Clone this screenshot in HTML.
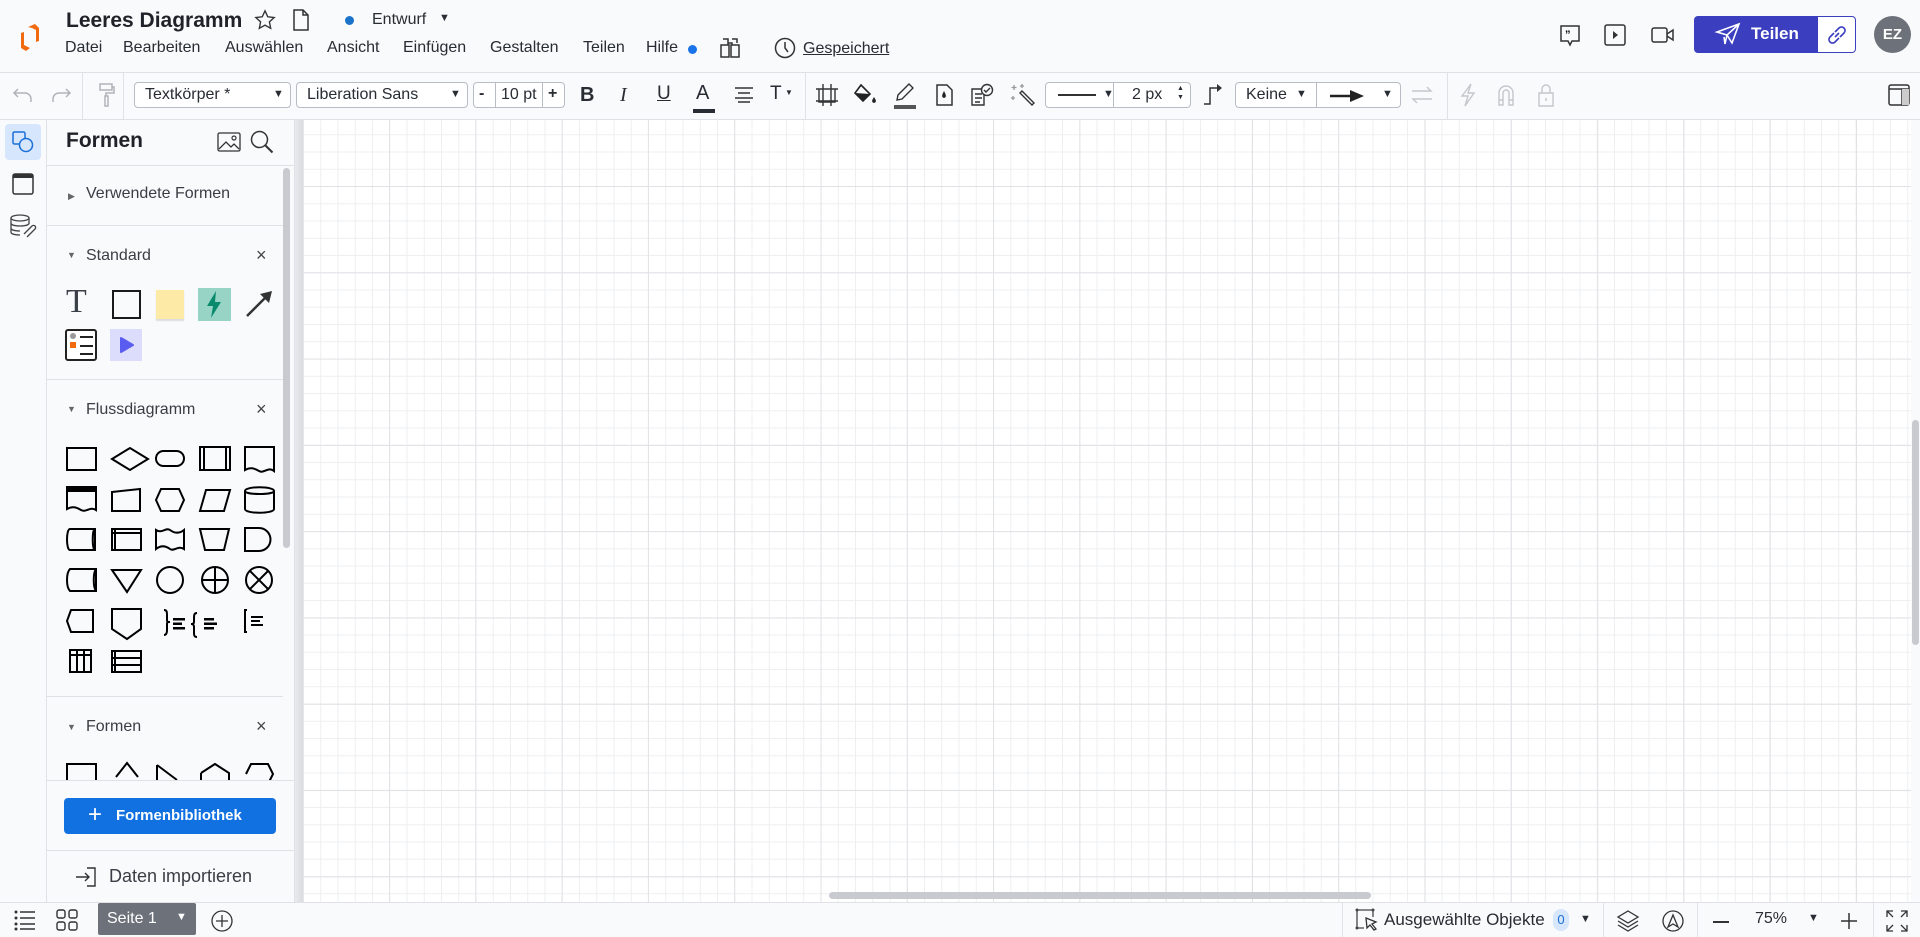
<!DOCTYPE html>
<html><head><meta charset="utf-8">
<style>
*{box-sizing:border-box;margin:0;padding:0}
body{width:1920px;height:937px;overflow:hidden;background:#f9fafc;font-family:"Liberation Sans",sans-serif;color:#282c33;position:relative}
.a{position:absolute}
.t{position:absolute;white-space:nowrap}
svg{position:absolute;overflow:visible}
.menu span{position:absolute;top:39px;font-size:16px;color:#282c33}
.sel{position:absolute;top:82px;height:26px;border:1px solid #b8bcc4;border-radius:4px;background:#fff;font-size:16px}
.hl{position:absolute;height:1px;background:#dfe1e6}
.vl{position:absolute;width:1px;background:#dfe1e6}
</style></head><body>
<!-- header -->
<svg width="24" height="28" style="left:18px;top:24px" viewBox="0 0 24 28"><path d="M10 3 L17 0 L21 4 L21 17 L18 18 L18 6 L14 4 Z" fill="#f26a10"/><path d="M3 9 L6 8 L6 21 L12 24 L8 27 L3 24 Z" fill="#f26a10"/></svg>
<div class="t" style="left:66px;top:9px;font-size:21px;font-weight:bold;color:#1f2329">Leeres Diagramm</div>
<svg width="22" height="22" style="left:254px;top:9px" viewBox="0 0 24 24"><path d="M12 2l3 6.5 7 .8-5.2 4.8 1.4 7L12 17.6 5.8 21.1l1.4-7L2 9.3l7-.8z" fill="none" stroke="#333" stroke-width="1.5"/></svg>
<svg width="18" height="22" style="left:292px;top:9px" viewBox="0 0 18 22"><path d="M2 1h9l5 5v15H2z M11 1v5h5" fill="none" stroke="#333" stroke-width="1.5"/></svg>
<div class="a" style="left:345px;top:16px;width:9px;height:9px;border-radius:50%;background:#1a73c8"></div>
<div class="t" style="left:372px;top:11px;font-size:16px">Entwurf</div>
<div class="t" style="left:439px;top:12px;font-size:11px">▼</div>
<div class="menu"><span style="left:65px">Datei</span><span style="left:123px">Bearbeiten</span><span style="left:225px">Auswählen</span><span style="left:327px">Ansicht</span><span style="left:403px">Einfügen</span><span style="left:490px">Gestalten</span><span style="left:583px">Teilen</span><span style="left:646px">Hilfe</span></div>
<div class="a" style="left:688px;top:45px;width:9px;height:9px;border-radius:50%;background:#1a73e8"></div>
<svg width="20" height="22" style="left:720px;top:37px" viewBox="0 0 20 22"><path d="M3 2h5v4 M12 2h5v4 M1 8h8v12H1z M11 8h8v12h-8z M8 8v-2h4v2" fill="none" stroke="#333" stroke-width="1.5"/></svg>
<svg width="22" height="22" style="left:774px;top:37px" viewBox="0 0 22 22"><circle cx="11" cy="11" r="9.5" fill="none" stroke="#333" stroke-width="1.5"/><path d="M11 5v6l3 4" fill="none" stroke="#333" stroke-width="1.5"/></svg>
<div class="t" style="left:803px;top:40px;font-size:16px;text-decoration:underline">Gespeichert</div>
<!-- right header -->
<svg width="22" height="24" style="left:1559px;top:24px" viewBox="0 0 22 24"><path d="M2 2h18v15h-7l-2 4-2-4H2z" fill="none" stroke="#333" stroke-width="1.5"/><text x="6" y="14" font-size="11" font-weight="bold" font-family="Liberation Sans">”</text></svg>
<svg width="22" height="22" style="left:1604px;top:24px" viewBox="0 0 22 22"><rect x="1" y="1" width="20" height="20" rx="2" fill="none" stroke="#333" stroke-width="1.5"/><path d="M9 7l5 4-5 4z" fill="#333"/></svg>
<svg width="24" height="18" style="left:1651px;top:26px" viewBox="0 0 24 18"><rect x="1" y="2" width="15" height="14" rx="2" fill="none" stroke="#333" stroke-width="1.5"/><path d="M16 8l6-4v10l-6-4" fill="none" stroke="#333" stroke-width="1.5"/></svg>
<div class="a" style="left:1694px;top:16px;width:162px;height:37px;border-radius:4px;background:#3b3fbf;border:1px solid #3b3fbf"></div>
<div class="a" style="left:1818px;top:17px;width:37px;height:35px;border-radius:0 3px 3px 0;background:#fff"></div>
<svg width="24" height="22" style="left:1716px;top:23px" viewBox="0 0 24 22"><path d="M1 9L23 1 16 20 11 12z M23 1L11 12 9 21 8 14" fill="none" stroke="#fff" stroke-width="1.6"/></svg>
<div class="t" style="left:1751px;top:24px;font-size:17px;font-weight:bold;color:#fff">Teilen</div>
<svg width="22" height="22" style="left:1826px;top:24px" viewBox="0 0 22 22"><path d="M9 13l4-4 M8 9l-4 4a3 3 0 0 0 5 5l4-4 M14 13l4-4a3 3 0 0 0-5-5l-4 4" fill="none" stroke="#3b3fbf" stroke-width="1.6"/></svg>
<div class="a" style="left:1874px;top:16px;width:37px;height:37px;border-radius:50%;background:#6d717a;color:#fff;font-weight:bold;font-size:15px;text-align:center;line-height:37px">EZ</div>
<!-- toolbar -->
<div class="hl" style="left:0;top:72px;width:1920px"></div>
<div class="hl" style="left:0;top:119px;width:1920px"></div>
<div class="vl" style="left:82px;top:72px;height:47px"></div>
<div class="vl" style="left:123px;top:72px;height:47px"></div>
<div class="vl" style="left:805px;top:72px;height:47px"></div>
<div class="vl" style="left:1447px;top:72px;height:47px"></div>
<svg width="22" height="16" style="left:12px;top:87px" viewBox="0 0 22 16"><path d="M6 2L2 6l4 4 M2 6h11a6 6 0 0 1 6 6v3" fill="none" stroke="#b0b3b9" stroke-width="1.5"/></svg>
<svg width="22" height="16" style="left:50px;top:87px" viewBox="0 0 22 16"><path d="M16 2l4 4-4 4 M20 6H9a6 6 0 0 0-6 6v3" fill="none" stroke="#b0b3b9" stroke-width="1.5"/></svg>
<svg width="16" height="24" style="left:99px;top:83px" viewBox="0 0 16 24"><path d="M1 1h12v6H1z M13 4h2v6H7v3 M6 13h3v10H6z" fill="none" stroke="#b0b3b9" stroke-width="1.5"/></svg>
<div class="sel" style="left:134px;width:157px"><span class="t" style="left:10px;top:3px">Textkörper *</span><span class="t" style="left:138px;top:5px;font-size:11px">▼</span></div>
<div class="sel" style="left:296px;width:172px"><span class="t" style="left:10px;top:3px">Liberation Sans</span><span class="t" style="left:153px;top:5px;font-size:11px">▼</span></div>
<div class="sel" style="left:473px;width:92px"><span class="t" style="left:5px;top:2px;font-weight:bold">-</span><div class="vl" style="left:21px;top:0;height:24px;background:#b8bcc4"></div><span class="t" style="left:27px;top:3px">10 pt</span><div class="vl" style="left:68px;top:0;height:24px;background:#b8bcc4"></div><span class="t" style="left:74px;top:2px;font-weight:bold">+</span></div>
<div class="t" style="left:580px;top:84px;font-size:20px;font-weight:bold">B</div>
<div class="t" style="left:620px;top:84px;font-size:20px;font-style:italic;font-family:'Liberation Serif',serif">I</div>
<div class="t" style="left:657px;top:83px;font-size:19px;text-decoration:underline">U</div>
<div class="t" style="left:696px;top:82px;font-size:20px">A</div>
<div class="a" style="left:693px;top:109px;width:22px;height:4px;background:#282c33"></div>
<svg width="20" height="16" style="left:734px;top:87px" viewBox="0 0 20 16"><path d="M1 1h18 M4 6h12 M1 11h18 M4 15h12" stroke="#333" stroke-width="1.4"/></svg>
<div class="t" style="left:770px;top:83px;font-size:19px">T</div><div class="t" style="left:785px;top:88px;font-size:8px">▼</div>
<svg width="24" height="24" style="left:815px;top:83px" viewBox="0 0 24 24"><path d="M4 6h16v13H4z M8 1v22 M16 1v22 M1 6h22 M1 18h22" fill="none" stroke="#333" stroke-width="1.4"/></svg>
<svg width="26" height="24" style="left:853px;top:83px" viewBox="0 0 26 24"><path d="M8 2l9 9-7 7-8-8z" fill="none" stroke="#222" stroke-width="1.6"/><path d="M2 10l15 1-7 7z" fill="#222"/><path d="M21 14c-2 3-3 5 0 6 3-1 2-3 0-6z" fill="#222"/></svg>
<svg width="24" height="26" style="left:893px;top:82px" viewBox="0 0 24 26"><path d="M4 18l1-5 11-11 4 4-11 11z" fill="none" stroke="#333" stroke-width="1.4"/><rect x="1" y="23" width="22" height="4" fill="#555"/></svg>
<svg width="18" height="22" style="left:935px;top:84px" viewBox="0 0 18 22"><path d="M2 1h10l5 5v15H2z" fill="none" stroke="#333" stroke-width="1.5"/><path d="M9 7c-2 4-3 6 0 7 3-1 2-3 0-7z" fill="#222"/></svg>
<svg width="24" height="24" style="left:970px;top:83px" viewBox="0 0 24 24"><path d="M2 6h12v16H2z M5 11h7 M5 15h7 M5 19h5" fill="none" stroke="#333" stroke-width="1.4"/><circle cx="17" cy="7" r="5.5" fill="#f9fafc" stroke="#333" stroke-width="1.4"/><path d="M14 7l2 2 4-4" fill="none" stroke="#333" stroke-width="1.4"/></svg>
<svg width="26" height="24" style="left:1010px;top:83px" viewBox="0 0 26 24"><path d="M10 10l12 12 2-2L12 8z" fill="none" stroke="#333" stroke-width="1.4"/><path d="M4 2v5 M1.5 4.5h5 M12 1v4 M10 3h4 M3 13v4 M1 15h4" stroke="#999" stroke-width="1.3"/></svg>
<div class="sel" style="left:1045px;width:146px"><div class="a" style="left:12px;top:11px;width:38px;height:2px;background:#333"></div><span class="t" style="left:57px;top:5px;font-size:11px">▼</span><div class="vl" style="left:67px;top:0;height:24px;background:#b8bcc4"></div><span class="t" style="left:86px;top:3px">2 px</span><span class="t" style="left:131px;top:1px;font-size:7px;line-height:9px">▲<br>▼</span></div>
<svg width="20" height="22" style="left:1203px;top:84px" viewBox="0 0 20 22"><path d="M1 20h6V4h8" fill="none" stroke="#333" stroke-width="1.5"/><path d="M14 0l5 4-5 4z" fill="#333"/></svg>
<div class="sel" style="left:1235px;width:166px"><span class="t" style="left:10px;top:3px">Keine</span><span class="t" style="left:60px;top:5px;font-size:11px">▼</span><div class="vl" style="left:80px;top:0;height:24px;background:#b8bcc4"></div><svg width="34" height="12" style="left:94px;top:7px" viewBox="0 0 34 12"><path d="M0 6h22" stroke="#222" stroke-width="2.5"/><path d="M20 0l14 6-14 6z" fill="#222"/></svg><span class="t" style="left:146px;top:5px;font-size:11px">▼</span></div>
<svg width="24" height="20" style="left:1410px;top:85px" viewBox="0 0 24 20"><path d="M2 6h19l-4-4 M22 14H3l4 4" fill="none" stroke="#c4c6cb" stroke-width="1.4"/></svg>
<svg width="18" height="24" style="left:1459px;top:83px" viewBox="0 0 18 24"><path d="M12 1L3 13h6l-3 10 9-13h-6z" fill="none" stroke="#c4c6cb" stroke-width="1.4"/></svg>
<svg width="18" height="22" style="left:1497px;top:84px" viewBox="0 0 18 22"><path d="M2 21V9a7 7 0 0 1 14 0v12h-4V9a3 3 0 0 0-6 0v12z M2 16h4 M12 16h4" fill="none" stroke="#c4c6cb" stroke-width="1.4"/></svg>
<svg width="18" height="24" style="left:1537px;top:83px" viewBox="0 0 18 24"><path d="M2 10h14v13H2z M5 10V6a4 4 0 0 1 8 0v4 M9 15v3" fill="none" stroke="#c4c6cb" stroke-width="1.4"/></svg>
<svg width="22" height="22" style="left:1888px;top:84px" viewBox="0 0 22 22"><rect x="1" y="1" width="20" height="20" rx="2" fill="none" stroke="#333" stroke-width="1.5"/><path d="M1 5h20 M14 5v16" stroke="#333" stroke-width="1.5"/><rect x="14" y="5" width="7" height="16" fill="#ccc"/></svg>
<!-- left rail -->
<div class="vl" style="left:46px;top:120px;height:782px"></div>
<div class="a" style="left:5px;top:124px;width:36px;height:36px;border-radius:4px;background:#d6e6fc"></div>
<svg width="24" height="24" style="left:11px;top:130px" viewBox="0 0 24 24"><rect x="2" y="2" width="12" height="12" rx="1.5" fill="none" stroke="#1a6fd8" stroke-width="1.5"/><circle cx="15" cy="15" r="6.5" fill="#d6e6fc" stroke="#1a6fd8" stroke-width="1.5"/></svg>
<svg width="22" height="22" style="left:12px;top:173px" viewBox="0 0 22 22"><rect x="1" y="1" width="20" height="20" rx="2" fill="none" stroke="#333" stroke-width="1.5"/><rect x="1" y="1" width="20" height="4" fill="#333"/></svg>
<svg width="26" height="24" style="left:10px;top:214px" viewBox="0 0 26 24"><ellipse cx="10" cy="4" rx="9" ry="3" fill="none" stroke="#444" stroke-width="1.3"/><path d="M1 4v14c0 2 4 3 9 3 M19 4v6 M1 9c0 2 4 3 9 3s9-1 9-3 M1 14c0 2 4 3 9 3" fill="none" stroke="#444" stroke-width="1.3"/><path d="M14 20l8-8a2 2 0 0 1 3 3l-8 8" fill="none" stroke="#444" stroke-width="1.3"/></svg>
<!-- panel -->
<div class="vl" style="left:294px;top:120px;height:782px"></div>
<div class="a" style="left:295px;top:120px;width:8px;height:782px;background:linear-gradient(90deg,#e9eaee,#d9dbe0)"></div>
<div class="t" style="left:66px;top:129px;font-size:21px;font-weight:bold;color:#1f2329">Formen</div>
<svg width="24" height="20" style="left:217px;top:132px" viewBox="0 0 24 20"><rect x="1" y="1" width="22" height="18" rx="1.5" fill="none" stroke="#333" stroke-width="1.3"/><path d="M2 17l7-7 5 5 3-3 5 5" fill="none" stroke="#333" stroke-width="1.3"/><circle cx="17" cy="6" r="2" fill="none" stroke="#333" stroke-width="1.2"/></svg>
<svg width="24" height="24" style="left:250px;top:130px" viewBox="0 0 24 24"><circle cx="9.5" cy="9.5" r="8" fill="none" stroke="#333" stroke-width="1.5"/><path d="M15.5 15.5l7 7" stroke="#333" stroke-width="2"/></svg>
<div class="hl" style="left:47px;top:165px;width:247px"></div>
<div class="t" style="left:68px;top:191px;font-size:9px;color:#666">▶</div>
<div class="t" style="left:86px;top:185px;font-size:16px;color:#3a3d44">Verwendete Formen</div>
<div class="hl" style="left:47px;top:225px;width:236px"></div>
<div class="t" style="left:67px;top:250px;font-size:9px;color:#666">▼</div>
<div class="t" style="left:86px;top:247px;font-size:16px;color:#3a3d44">Standard</div>
<div class="t" style="left:256px;top:245px;font-size:18px;color:#444">×</div>
<div class="t" style="left:66px;top:283px;font-size:34px;font-family:'Liberation Serif',serif;color:#3a3f48">T</div>
<div class="a" style="left:112px;top:290px;width:29px;height:29px;border:2.5px solid #1a1a1a"></div>
<div class="a" style="left:156px;top:290px;width:28px;height:29px;background:#fdeaa6;box-shadow:0 2px 1px #ddd"></div>
<div class="a" style="left:198px;top:288px;width:33px;height:33px;background:#98d4c6"></div>
<svg width="16" height="27" style="left:206px;top:291px" viewBox="0 0 16 27"><path d="M10 0L1 15h6l-2 12 10-16H9z" fill="#0a8a6d"/></svg>
<svg width="28" height="28" style="left:245px;top:290px" viewBox="0 0 28 28"><path d="M2 26L22 6" stroke="#333" stroke-width="2.5"/><path d="M27 1l-3 12-9-9z" fill="#333"/></svg>
<div class="a" style="left:65px;top:329px;width:32px;height:32px;border:2px solid #222;border-radius:3px;background:#fff"></div>
<div class="a" style="left:70px;top:333px;width:6px;height:6px;border-radius:50%;background:#999"></div>
<div class="a" style="left:70px;top:342px;width:6px;height:6px;background:#f26a10"></div>
<div class="a" style="left:80px;top:336px;width:13px;height:1.5px;background:#222"></div>
<div class="a" style="left:80px;top:345px;width:13px;height:1.5px;background:#222"></div>
<div class="a" style="left:80px;top:353px;width:13px;height:1.5px;background:#222"></div>
<div class="a" style="left:110px;top:329px;width:32px;height:32px;background:#dcdcfc"></div>
<svg width="14" height="16" style="left:120px;top:337px" viewBox="0 0 14 16"><path d="M1 1l12 7-12 7z" fill="#5a5cf0" stroke="#5a5cf0" stroke-linejoin="round" stroke-width="2"/></svg>
<div class="hl" style="left:47px;top:379px;width:236px"></div>
<div class="t" style="left:67px;top:404px;font-size:9px;color:#666">▼</div>
<div class="t" style="left:86px;top:401px;font-size:16px;color:#3a3d44">Flussdiagramm</div>
<div class="t" style="left:256px;top:399px;font-size:18px;color:#444">×</div>
<svg width="240" height="340" style="left:60px;top:440px" viewBox="0 0 240 340">
<g fill="none" stroke="#000" stroke-width="2">
<rect x="7" y="8" width="29" height="22"/>
<path d="M52 19l18-11 18 11-18 11z"/>
<rect x="96" y="11" width="28" height="15" rx="7.5"/>
<rect x="140" y="7" width="30" height="23"/><path d="M144 7v23 M166 7v23"/>
<path d="M185 7h29v24c-6-5-10 3-15 0s-9-4-14-1z"/>
<path d="M7 48h29v22c-6-4-10 3-15 0s-9-4-14-1z"/><rect x="7" y="47" width="29" height="4" fill="#000"/>
<path d="M52 52l28-3v22h-28z"/>
<path d="M96 60l5-11h18l5 11-5 11h-18z"/>
<path d="M146 50h24l-6 21h-24z"/>
<path d="M185 51c0-5 29-5 29 0v18c0 5-29 5-29 0z M185 51c0 4 29 4 29 0"/>
<path d="M10 89h25v21H10c-4 0-4-21 0-21z M35 89c-3 0-3 21 0 21"/>
<rect x="52" y="89" width="29" height="21"/><path d="M55 89v21 M52 93h29"/>
<path d="M96 90c6 4 10-3 14 0s9 4 14 0v19c-6-4-10 3-14 0s-9-4-14 0z"/>
<path d="M140 89h29l-5 21h-19z"/>
<path d="M185 88h14a11 11 0 0 1 0 23h-14z"/>
<path d="M10 129h26v22H10c-4-4-4-18 0-22z M36 129c-3 4-3 18 0 22"/>
<path d="M52 130h29l-14 22z"/>
<circle cx="110" cy="140" r="13"/>
<circle cx="155" cy="140" r="13"/><path d="M142 140h26 M155 127v26"/>
<circle cx="199" cy="140" r="13"/><path d="M190 131l18 18 M208 131l-18 18"/>
<path d="M7 181l4-11h22v22H11z"/>
<path d="M52 169h29v20l-14 10-15-10z"/>
<path d="M104 170c3 0 3 2 3 6v4c0 3 2 2 3 2-1 0-3-1-3 2v6c0 3-1 5-3 5"/>
<path d="M137 173c-3 0-3 2-3 6v3c0 2-2 2-3 2 1 0 3 0 3 3v5c0 3 0 5 3 5"/>
<path d="M187 170h-2v22h2"/>
<rect x="10" y="210" width="21" height="22"/><path d="M17 210v22 M24 210v22 M10 215h21"/>
<rect x="52" y="211" width="29" height="21"/><path d="M55 211v21 M52 218h29 M52 225h29"/>
<rect x="7" y="324" width="29" height="30"/>
<path d="M56 337l11-14 11 14"/>
<path d="M97 325l20 15 M97 325v30"/>
<path d="M141 333l14-9 14 9v20 M141 333v20"/>
<path d="M186 334l5-10h17l5 10-5 10"/>
</g>
<g fill="#000"><rect x="113" y="178" width="12" height="2.5"/><rect x="113" y="182.5" width="9" height="2.5"/><rect x="113" y="187" width="12" height="2.5"/>
<rect x="144" y="178" width="10" height="2.5"/><rect x="144" y="182.5" width="13" height="2.5"/><rect x="144" y="187" width="10" height="2.5"/>
<rect x="191" y="176" width="12" height="2"/><rect x="191" y="180" width="9" height="2"/><rect x="191" y="184" width="12" height="2"/></g>
</svg>
<div class="a" style="left:283px;top:168px;width:7px;height:380px;border-radius:4px;background:#c8cad0"></div>
<div class="hl" style="left:47px;top:696px;width:236px"></div>
<div class="t" style="left:67px;top:722px;font-size:9px;color:#666">▼</div>
<div class="t" style="left:86px;top:718px;font-size:16px;color:#3a3d44">Formen</div>
<div class="t" style="left:256px;top:716px;font-size:18px;color:#444">×</div>
<div class="a" style="left:47px;top:780px;width:247px;height:122px;background:#f9fafc"></div>
<div class="hl" style="left:47px;top:780px;width:247px"></div>
<div class="a" style="left:64px;top:798px;width:212px;height:36px;border-radius:4px;background:#1271e0"></div>
<div class="t" style="left:88px;top:801px;font-size:24px;color:#fff;font-weight:300">+</div>
<div class="t" style="left:116px;top:807px;font-size:15px;font-weight:bold;color:#fff">Formenbibliothek</div>
<div class="hl" style="left:47px;top:850px;width:247px"></div>
<svg width="22" height="20" style="left:75px;top:867px" viewBox="0 0 22 20"><path d="M1 10h13 M10 6l4 4-4 4 M12 1h8v18h-8" fill="none" stroke="#333" stroke-width="1.4"/></svg>
<div class="t" style="left:109px;top:866px;font-size:18px;color:#3a3d44">Daten importieren</div>
<!-- canvas -->
<div class="a" style="left:303px;top:120px;width:1608px;height:782px;background-color:#fff;background-image:linear-gradient(#e1e2e6 1px,transparent 1px),linear-gradient(90deg,#e1e2e6 1px,transparent 1px),linear-gradient(#eeeff1 1px,transparent 1px),linear-gradient(90deg,#eeeff1 1px,transparent 1px);background-size:86.3px 86.3px,86.3px 86.3px,17.26px 17.26px,17.26px 17.26px;background-position:0 66px,86px 0,0 66px,0 0"></div>
<div class="a" style="left:1911px;top:120px;width:9px;height:782px;background:#f9fafc"></div>
<div class="a" style="left:1912px;top:420px;width:7px;height:225px;border-radius:4px;background:#c8cad0"></div>
<div class="a" style="left:829px;top:892px;width:542px;height:7px;border-radius:4px;background:#c8cad0"></div>
<!-- bottom bar -->
<div class="a" style="left:0;top:902px;width:1920px;height:35px;background:#f9fafc;border-top:1px solid #dfe1e6"></div>
<svg width="22" height="20" style="left:14px;top:910px" viewBox="0 0 22 20"><g fill="#333"><circle cx="2" cy="2" r="1.5"/><circle cx="2" cy="8" r="1.5"/><circle cx="2" cy="14" r="1.5"/><circle cx="2" cy="19" r="1.5"/></g><path d="M6 2h15 M6 8h15 M6 14h15 M6 19h15" stroke="#333" stroke-width="1.4"/></svg>
<svg width="22" height="22" style="left:56px;top:909px" viewBox="0 0 22 22"><g fill="none" stroke="#333" stroke-width="1.4"><rect x="1" y="1" width="8" height="8" rx="2"/><rect x="13" y="1" width="8" height="8" rx="2"/><rect x="1" y="13" width="8" height="8" rx="2"/><rect x="13" y="13" width="8" height="8" rx="2"/></g></svg>
<div class="a" style="left:98px;top:903px;width:98px;height:32px;background:#6d717a;border-radius:2px"></div>
<div class="t" style="left:107px;top:910px;font-size:16px;color:#fff">Seite 1</div>
<div class="t" style="left:176px;top:911px;font-size:11px;color:#fff">▼</div>
<svg width="22" height="22" style="left:211px;top:910px" viewBox="0 0 22 22"><circle cx="11" cy="11" r="10" fill="none" stroke="#333" stroke-width="1.3"/><path d="M5 11h12 M11 5v12" stroke="#333" stroke-width="1.3"/></svg>
<div class="vl" style="left:1342px;top:903px;height:34px"></div>
<div class="vl" style="left:1603px;top:903px;height:34px"></div>
<div class="vl" style="left:1697px;top:903px;height:34px"></div>
<div class="vl" style="left:1873px;top:903px;height:34px"></div>
<svg width="24" height="24" style="left:1355px;top:908px" viewBox="0 0 24 24"><path d="M2 2h16v7 M2 2v18h7" fill="none" stroke="#444" stroke-width="1.3"/><circle cx="2" cy="2" r="1.5" fill="#444"/><circle cx="18" cy="2" r="1.5" fill="#444"/><circle cx="2" cy="20" r="1.5" fill="#444"/><path d="M11 10l10 4-4 2 4 5-2 1-4-5-3 3z" fill="none" stroke="#333" stroke-width="1.3"/></svg>
<div class="t" style="left:1384px;top:910px;font-size:17px">Ausgewählte Objekte</div>
<div class="a" style="left:1553px;top:909px;width:16px;height:22px;border-radius:8px;background:#d6e6fc;color:#1a6fd8;font-size:13px;text-align:center;line-height:22px">0</div>
<div class="t" style="left:1580px;top:913px;font-size:11px">▼</div>
<svg width="22" height="22" style="left:1617px;top:910px" viewBox="0 0 22 22"><path d="M11 1l10 6-10 6-10-6z M1 11l10 6 10-6 M1 15l10 6 10-6" fill="none" stroke="#333" stroke-width="1.3"/></svg>
<svg width="22" height="22" style="left:1662px;top:910px" viewBox="0 0 22 22"><circle cx="11" cy="11" r="10" fill="none" stroke="#333" stroke-width="1.3"/><path d="M6 17l5-12 5 12-5-3z" fill="none" stroke="#333" stroke-width="1.3"/></svg>
<div class="a" style="left:1713px;top:921px;width:16px;height:1.5px;background:#333"></div>
<div class="t" style="left:1755px;top:910px;font-size:16px">75%</div>
<div class="t" style="left:1808px;top:912px;font-size:11px">▼</div>
<svg width="16" height="16" style="left:1841px;top:913px" viewBox="0 0 16 16"><path d="M0 8h16 M8 0v16" stroke="#333" stroke-width="1.5"/></svg>
<svg width="22" height="22" style="left:1886px;top:910px" viewBox="0 0 22 22"><path d="M1 7V1h6 M1 1l6 6 M15 1h6v6 M21 1l-6 6 M1 15v6h6 M1 21l6-6 M21 15v6h-6 M21 21l-6-6" fill="none" stroke="#333" stroke-width="1.3"/></svg>
</body></html>
